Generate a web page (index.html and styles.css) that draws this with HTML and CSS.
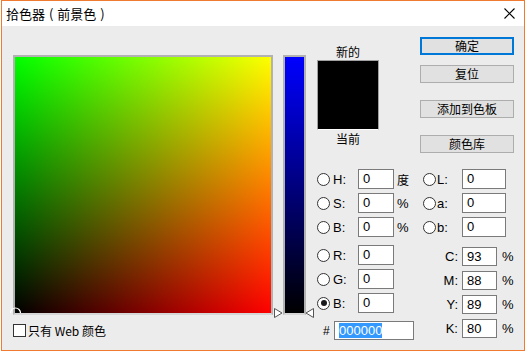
FILE: index.html
```html
<!DOCTYPE html>
<html lang="zh">
<head>
<meta charset="utf-8">
<title>拾色器</title>
<link rel="stylesheet" href="styles.css">
</head>
<body>
<div class="window">
  <div class="titlebar">
    <span class="title">拾色器 ( 前景色 )</span>
    <svg class="close" width="11" height="11" viewBox="0 0 11 11"><path d="M0.5 0.5L10.5 10.5M10.5 0.5L0.5 10.5" stroke="#000" stroke-width="1.1" fill="none"/></svg>
  </div>
  <div class="content">
    <div class="col-field">
      <div class="field">
        <svg class="marker" width="14" height="8" viewBox="0 0 14 8"><path d="M1.5 7 A5 5 0 0 1 11.5 7" stroke="#fff" stroke-width="1.2" fill="none"/></svg>
      </div>
      <div class="web-only"><span class="checkbox"></span><span class="cjk">只有 Web 颜色</span></div>
    </div>
    <div class="slider-wrap">
      <div class="slider"></div>
      <svg class="tri tri-left" width="9" height="10" viewBox="0 0 9 10"><path d="M0.5 0.5L8 5L0.5 9.5Z" fill="#fff" stroke="#555" stroke-width="1"/></svg>
      <svg class="tri tri-right" width="9" height="10" viewBox="0 0 9 10"><path d="M8.5 0.5L1 5L8.5 9.5Z" fill="#fff" stroke="#555" stroke-width="1"/></svg>
    </div>
    <div class="right">
      <div class="top">
        <div class="preview">
          <div class="pv-label cjk">新的</div>
          <div class="swatch"><div class="sw-new"></div><div class="sw-cur"></div></div>
          <div class="pv-label cjk">当前</div>
        </div>
        <div class="buttons">
          <div class="btn btn-default cjk">确定</div>
          <div class="btn btn-reset cjk">复位</div>
          <div class="btn btn-gap cjk">添加到色板</div>
          <div class="btn btn-gap cjk">颜色库</div>
        </div>
      </div>
      <div class="fields">
        <div class="fcol fcol-left">
          <div class="row"><span class="radio"></span><span class="lbl">H:</span><span class="inp">0</span><span class="unit cjk">度</span></div>
          <div class="row"><span class="radio"></span><span class="lbl">S:</span><span class="inp">0</span><span class="unit">%</span></div>
          <div class="row"><span class="radio"></span><span class="lbl">B:</span><span class="inp">0</span><span class="unit">%</span></div>
          <div class="row row-group"><span class="radio"></span><span class="lbl">R:</span><span class="inp">0</span></div>
          <div class="row"><span class="radio"></span><span class="lbl">G:</span><span class="inp">0</span></div>
          <div class="row"><span class="radio radio-on"></span><span class="lbl">B:</span><span class="inp">0</span></div>
          <div class="row hex-row"><span class="hash">#</span><span class="inp inp-hex"><span class="sel">000000</span></span></div>
        </div>
        <div class="fcol fcol-right">
          <div class="row"><span class="radio"></span><span class="lbl lbl-lab">L:</span><span class="inp inp-lab">0</span></div>
          <div class="row"><span class="radio"></span><span class="lbl lbl-lab">a:</span><span class="inp inp-lab">0</span></div>
          <div class="row"><span class="radio"></span><span class="lbl lbl-lab">b:</span><span class="inp inp-lab">0</span></div>
          <div class="row row-cmyk-first"><span class="lbl lbl-cmyk">C:</span><span class="inp inp-cmyk">93</span><span class="pct">%</span></div>
          <div class="row"><span class="lbl lbl-cmyk">M:</span><span class="inp inp-cmyk">88</span><span class="pct">%</span></div>
          <div class="row"><span class="lbl lbl-cmyk">Y:</span><span class="inp inp-cmyk">89</span><span class="pct">%</span></div>
          <div class="row"><span class="lbl lbl-cmyk">K:</span><span class="inp inp-cmyk">80</span><span class="pct">%</span></div>
        </div>
      </div>
    </div>
  </div>
</div>
</body>
</html>
```

FILE: styles.css
```css
* { box-sizing: border-box; }

body {
  margin: 0;
  background: #ffffff;
  font-family: "Liberation Sans", "Noto Sans CJK SC", sans-serif;
  font-size: 13px;
  color: #000;
}

.cjk {
  font-family: "Noto Sans CJK SC", "Liberation Sans", sans-serif;
  font-size: 12px;
}

.window {
  margin-left: 1px;
  width: 524px;
  height: 351px;
  border: 1px solid #f07a30;
  background: #ececec;
}

.titlebar {
  height: 25px;
  background: #ffffff;
  display: flex;
  align-items: center;
  justify-content: space-between;
  padding: 0 9px 0 4px;
}

.title {
  font-family: "Noto Sans CJK SC", sans-serif;
  font-size: 13px;
  line-height: 16px;
  word-spacing: 1px;
}

.close { display: block; }

.content {
  display: flex;
  align-items: flex-start;
  padding: 11px 0 0 11px;
}

/* colour field */
.col-field { margin-top: 18px; }

.field {
  position: relative;
  width: 260px;
  height: 260px;
  border: 2px solid #b2b2b2;
  border-bottom-color: #d6d6d6;
  background:
    linear-gradient(to bottom, #00ff00, #000000),
    linear-gradient(to right, #000000, #ff0000);
  background-blend-mode: screen;
}

.marker {
  position: absolute;
  left: -6px;
  top: 249px;
}

.web-only {
  display: flex;
  align-items: center;
  margin-top: 9px;
  height: 13px;
}

.checkbox {
  width: 13px;
  height: 13px;
  border: 1px solid #333;
  background: #fff;
  margin-right: 2px;
}

/* slider */
.slider-wrap {
  position: relative;
  margin-left: 10px;
  margin-top: 18px;
}

.slider {
  width: 23px;
  height: 260px;
  border: 2px solid #b2b2b2;
  border-bottom-color: #d6d6d6;
  background: linear-gradient(to bottom, #0000ff, #000000);
}

.tri { position: absolute; top: 253px; display: block; }
.tri-left { left: -9px; }
.tri-right { left: 22px; }

/* right side */
.right { margin-left: 11px; }

.top { display: flex; }

.preview {
  width: 62px;
  padding-top: 6px;
  display: flex;
  flex-direction: column;
}

.pv-label {
  height: 17px;
  line-height: 17px;
  text-align: center;
}

.swatch {
  border: 1px solid #a0a0a0;
  border-bottom-color: #ffffff;
}

.sw-new { height: 34px; background: #000; }
.sw-cur { height: 34px; background: #000; }

.buttons {
  margin-left: 41px;
  width: 94px;
  display: flex;
  flex-direction: column;
}

.btn {
  height: 18px;
  line-height: 16px;
  text-align: center;
  background: #e1e1e1;
  border: 1px solid #adadad;
}

.btn-default {
  border: 2px solid #0078d7;
  line-height: 14px;
}

.btn-reset { margin-top: 10px; }
.btn-gap { margin-top: 17px; }

/* value fields */
.fields {
  display: flex;
  margin-top: 16px;
}

.fcol {
  display: flex;
  flex-direction: column;
  gap: 4px;
}

.fcol-left { width: 106px; }

.row {
  display: flex;
  align-items: center;
  height: 20px;
}

.row-group { margin-top: 4px; }
.row-cmyk-first { margin-top: 5px; }

.radio {
  width: 13px;
  height: 13px;
  border: 1px solid #333;
  border-radius: 50%;
  background: #fff;
  display: flex;
  align-items: center;
  justify-content: center;
  margin-right: 3px;
}

.radio-on::after {
  content: "";
  width: 6px;
  height: 6px;
  border-radius: 50%;
  background: #1a1a1a;
}

.fcol-right .radio { margin-right: 1px; }

.lbl { width: 25px; }

.lbl-cmyk {
  margin-left: 14px;
  text-align: right;
  padding-right: 4px;
}

.inp {
  width: 36px;
  height: 20px;
  border: 1px solid #7a7a7a;
  background: #fff;
  line-height: 18px;
  padding-left: 4px;
}

.inp-lab { width: 44px; }
.inp-cmyk { width: 35px; height: 19px; line-height: 17px; }

.unit { margin-left: 3px; }
.pct { margin-left: 5px; }

.hex-row {
  margin-top: 4px;
  padding-left: 6px;
  height: 19px;
}

.hash {
  width: 11px;
  font-size: 12px;
}

.inp-hex {
  width: 80px;
  height: 19px;
  display: flex;
  align-items: center;
  padding-left: 4px;
}

.sel {
  display: inline-block;
  height: 15px;
  line-height: 15px;
  background: #3399ff;
  color: #fff;
}
```
